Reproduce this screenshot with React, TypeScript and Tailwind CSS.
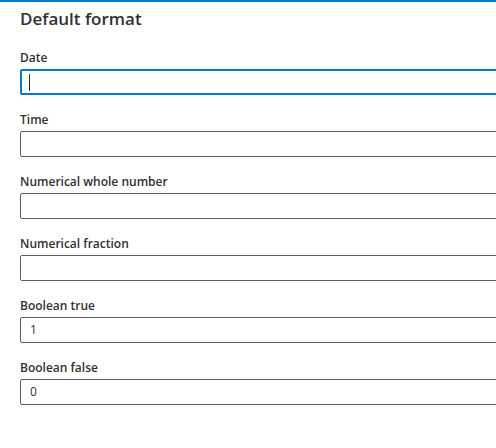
import React from "react";

const fields = [
  { label: "Date", value: "", focused: true },
  { label: "Time", value: "" },
  { label: "Numerical whole number", value: "" },
  { label: "Numerical fraction", value: "" },
  { label: "Boolean true", value: "1" },
  { label: "Boolean false", value: "0" },
];

const App = () => {
  return (
    <div className="w-[496px] h-[448px] overflow-hidden bg-white border-t-2 border-[#0078d4] font-['Open_Sans',sans-serif] text-[#323130]">
      <div className="pl-5 pt-[5px]">
        <h2 className="text-[17px] leading-[24px] font-semibold">Default format</h2>
        <div className="mt-[17px] w-[520px]">
          {fields.map((f) => (
            <div key={f.label} className="mb-[15px]">
              <label className="block text-[12px] leading-[20px] font-semibold mb-px">{f.label}</label>
              {f.focused ? (
                <div className="h-[26px] rounded-[2px] border-2 border-[#0078d4] flex items-center pl-[7px]">
                  <span className="w-px h-[17px] bg-[#323130]" />
                </div>
              ) : (
                <div className="h-[26px] rounded-[2px] border border-[#605e5c] flex items-center pl-[9px] text-[12px] text-[#323130]">
                  {f.value}
                </div>
              )}
            </div>
          ))}
        </div>
      </div>
    </div>
  );
};

export default App;
